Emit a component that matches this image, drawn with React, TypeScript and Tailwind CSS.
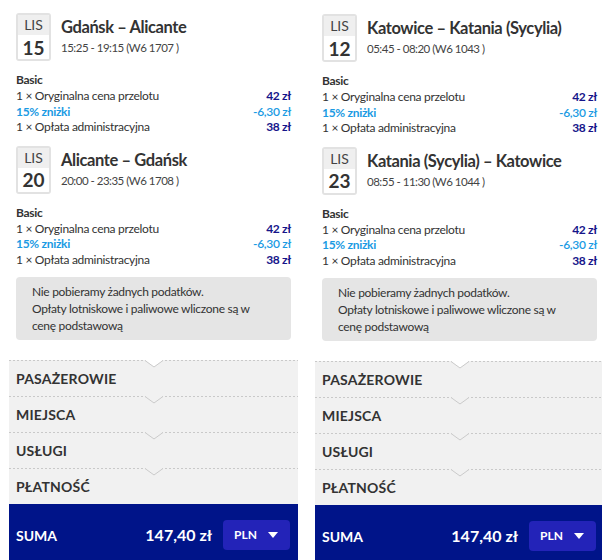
import React from "react";

type Leg = { day: string; route: string; time: string };

const font = { fontFamily: '"Lato", "Liberation Sans", sans-serif' };

function Segment({ leg }: { leg: Leg }) {
  return (
    <div>
      <div className="flex gap-[10px]">
        <div className="w-[35px] h-[48px] shrink-0 rounded-[3px] border-2 border-[#e2e2e2] overflow-hidden flex flex-col">
          <div className="h-[20px] bg-[#efefef] flex items-center justify-center text-[14px] text-[#444] leading-none">LIS</div>
          <div className="flex-1 bg-white flex items-center justify-center text-[19px] font-bold text-[#333] leading-none">{leg.day}</div>
        </div>
        <div className="pt-[3px]">
          <div className="text-[16.5px] font-bold text-[#333] leading-[22px] tracking-[-0.4px]">{leg.route}</div>
          <div className="text-[11.5px] text-[#444] leading-[16px] mt-[2px] tracking-[-0.5px]">{leg.time}</div>
        </div>
      </div>
      <div className="mt-[11px] text-[12px] text-[#333] tracking-[-0.3px]">
        <div className="font-bold leading-[16px]">Basic</div>
        <div className="flex justify-between leading-[15.5px]">
          <span>1 × Oryginalna cena przelotu</span>
          <span className="font-bold text-[#15158a]">42 zł</span>
        </div>
        <div className="flex justify-between leading-[15.5px] text-[#1b9be3] font-semibold">
          <span className="font-bold">15% zniżki</span>
          <span>-6,30 zł</span>
        </div>
        <div className="flex justify-between leading-[15.5px]">
          <span>1 × Opłata administracyjna</span>
          <span className="font-bold text-[#15158a]">38 zł</span>
        </div>
      </div>
    </div>
  );
}

function Section({ label, first }: { label: string; first?: boolean }) {
  return (
    <div className="relative h-[36px] flex items-center px-[7px]">
      <div className="absolute left-0 right-0 top-0 h-px bg-[repeating-linear-gradient(90deg,#c9c9c9_0_2px,transparent_2px_4px)]" />
      <svg className="absolute top-0 left-1/2 -translate-x-1/2" width="18" height="8" viewBox="0 0 18 8">
        <polygon points="0,0 9,7 18,0" fill={first ? "#ffffff" : "#f1f1f1"} />
        <polyline points="0,0.5 9,7 18,0.5" fill="none" stroke="#cacaca" strokeWidth="1" />
      </svg>
      <span className="text-[14px] font-bold text-[#333] tracking-[0.2px]">{label}</span>
    </div>
  );
}

function Column({ legs }: { legs: Leg[] }) {
  return (
    <div className="w-[289px] shrink-0 flex flex-col">
      <div className="px-[7px] pt-[13px]">
        <Segment leg={legs[0]} />
        <div className="mt-[11px]">
          <Segment leg={legs[1]} />
        </div>
        <div className="mt-[10px] rounded-[4px] bg-[#e5e5e5] pl-4 pr-[24px] py-[6px] text-[12px] leading-[17px] text-[#333] tracking-[-0.3px]">
          Nie pobieramy żadnych podatków.
          <br />
          Opłaty lotniskowe i paliwowe wliczone są w cenę podstawową
        </div>
      </div>
      <div className="mt-[20px] bg-[#f1f1f1]">
        <Section label="PASAŻEROWIE" first />
        <Section label="MIEJSCA" />
        <Section label="USŁUGI" />
        <Section label="PŁATNOŚĆ" />
      </div>
      <div className="h-[62px] bg-[#001489] flex items-center pl-[7px] pr-[8px] text-white">
        <span className="text-[14px] font-bold">SUMA</span>
        <span className="ml-auto text-[16px] font-bold">147,40 zł</span>
        <button className="ml-[11px] w-[67px] h-[30px] rounded-[4px] bg-[#2323b8] flex items-center justify-between pl-[11px] pr-[12px]">
          <span className="text-[12px] font-bold">PLN</span>
          <svg width="10" height="6" viewBox="0 0 10 6">
            <polygon points="0,0 10,0 5,6" fill="#ffffff" />
          </svg>
        </button>
      </div>
    </div>
  );
}

export default function App() {
  return (
    <div className="w-[602px] h-[560px] overflow-hidden bg-white" style={font}>
      <div className="flex gap-[17px] pl-[9px]">
        <Column
          legs={[
            { day: "15", route: "Gdańsk – Alicante", time: "15:25 - 19:15 (W6 1707 )" },
            { day: "20", route: "Alicante – Gdańsk", time: "20:00 - 23:35 (W6 1708 )" },
          ]}
        />
        <div className="mt-px">
          <Column
            legs={[
              { day: "12", route: "Katowice – Katania (Sycylia)", time: "05:45 - 08:20 (W6 1043 )" },
              { day: "23", route: "Katania (Sycylia) – Katowice", time: "08:55 - 11:30 (W6 1044 )" },
            ]}
          />
        </div>
      </div>
    </div>
  );
}
